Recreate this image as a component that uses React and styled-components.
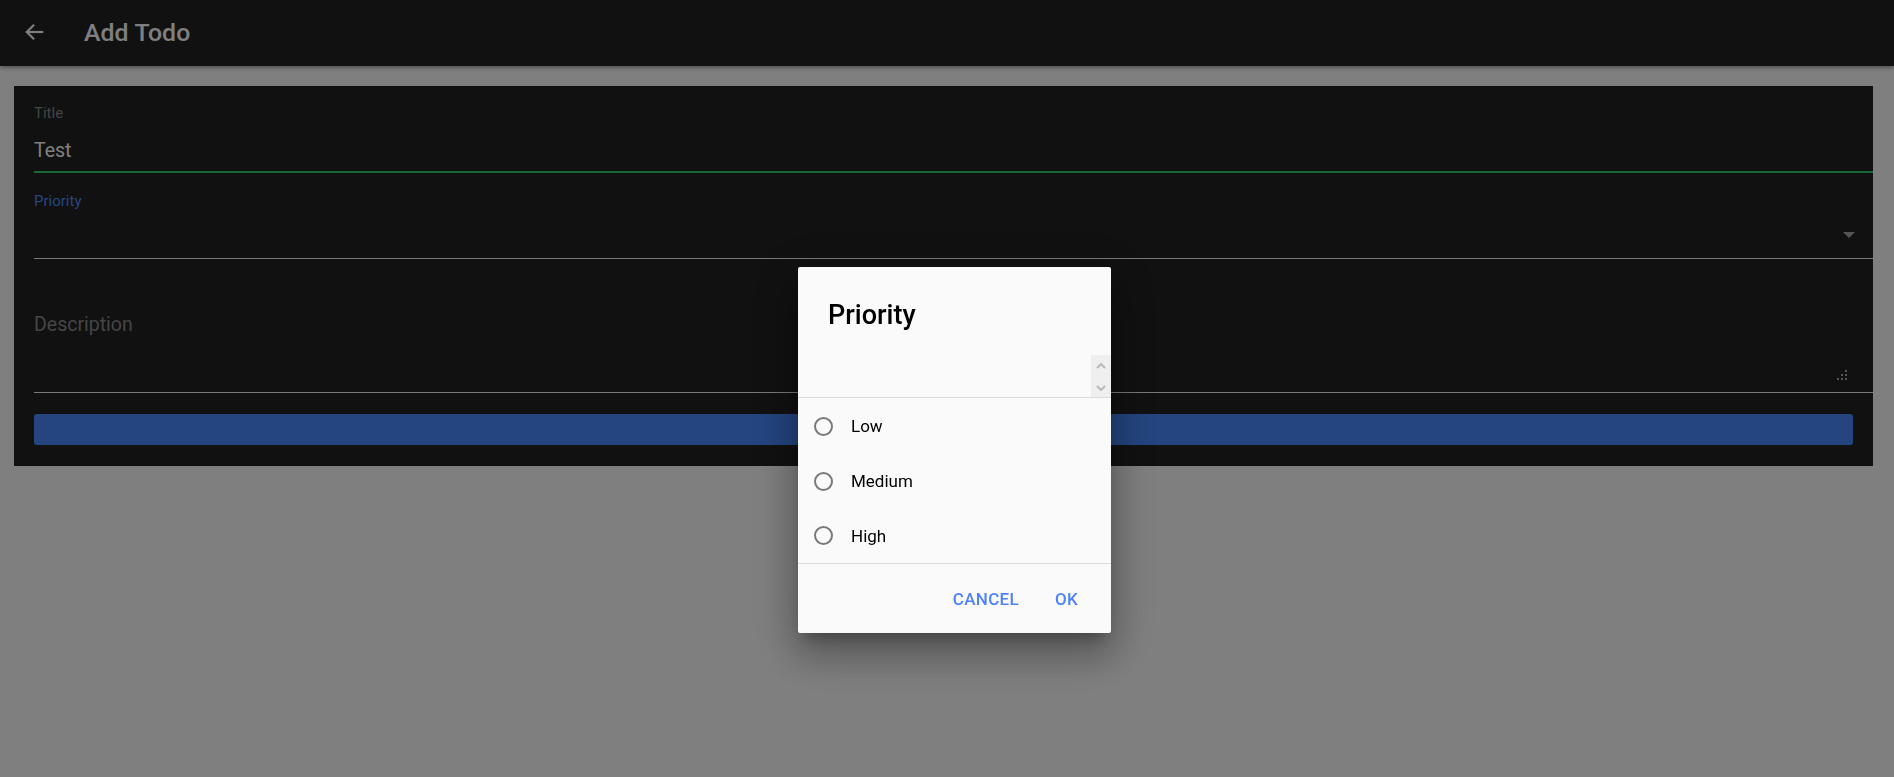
import React, { useState } from "react";
import styled, { createGlobalStyle } from "styled-components";

const GlobalStyle = createGlobalStyle`
	html, body {
		margin: 0;
		padding: 0;
		background: #ffffff;
		font-family: Roboto, "Liberation Sans", sans-serif;
		overflow: hidden;
	}
`;

const Page = styled.div`
	width: 1894px;
	height: 777px;
	background: #ffffff;
`;

const Toolbar = styled.header`
	height: 66px;
	background: #222222;
	display: flex;
	align-items: center;
	box-shadow: 0 2px 4px rgba(0, 0, 0, 0.35);
	position: relative;
`;

const BackButton = styled.button`
	border: none;
	background: none;
	padding: 0;
	margin: -2px 0 0 22px;
	width: 26px;
	height: 26px;
	display: flex;
	align-items: center;
	justify-content: center;
	color: #ffffff;
	cursor: pointer;
`;

const ToolbarTitle = styled.h1`
	margin: -2px 0 0 36px;
	font-size: 24.8px;
	font-weight: 500;
	color: #ffffff;
	letter-spacing: 0.1px;
`;

const Card = styled.form`
	margin: 20px 21px 0 14px;
	height: 380px;
	background: #222222;
	padding: 0 0 0 20px;
	box-sizing: border-box;
	display: flex;
	flex-direction: column;
`;

const Field = styled.div`
	display: flex;
	flex-direction: column;
	flex-shrink: 0;
	position: relative;
	border-bottom: ${(p) => (p.$active ? "2px solid #2dd36f" : "1px solid #f2f2f2")};
	height: ${(p) => p.$h}px;
	box-sizing: border-box;
`;

const Label = styled.label`
	font-size: 15px;
	line-height: 18px;
	color: ${(p) => p.$color || "#8a8a8a"};
	margin-top: ${(p) => p.$top}px;
`;

const Value = styled.div`
	font-size: 19.5px;
	line-height: 24px;
	color: #ffffff;
	margin-top: 17px;
`;

const Placeholder = styled.div`
	font-size: 19.5px;
	line-height: 24px;
	color: #8a8a8a;
	margin-top: 54px;
`;

const Caret = styled.span`
	position: absolute;
	right: 18px;
	top: 59px;
	width: 0;
	height: 0;
	border-left: 6px solid transparent;
	border-right: 6px solid transparent;
	border-top: 6px solid #aaaaaa;
`;

const ResizeGrip = styled.svg`
	position: absolute;
	right: 26px;
	bottom: 12px;
`;

const SubmitBar = styled.button`
	flex-shrink: 0;
	margin: 21px 20px 0 0;
	height: 31px;
	border: none;
	border-radius: 3px;
	background: #488aff;
`;

const Backdrop = styled.div`
	position: fixed;
	inset: 0;
	background: rgba(0, 0, 0, 0.5);
`;

const Dialog = styled.div`
	position: fixed;
	left: 798px;
	top: 267px;
	width: 313px;
	height: 366px;
	background: #fafafa;
	border-radius: 2px;
	box-shadow: 0 11px 15px -7px rgba(0, 0, 0, 0.3), 0 24px 38px 3px rgba(0, 0, 0, 0.2),
		0 9px 46px 8px rgba(0, 0, 0, 0.16);
	display: flex;
	flex-direction: column;
	font-family: Roboto, "Liberation Sans", sans-serif;
`;

const DialogTitle = styled.h2`
	margin: 0;
	padding: 32px 30px 0 30px;
	height: 88px;
	box-sizing: border-box;
	font-size: 27px;
	font-weight: 500;
	color: #000000;
`;

const ScrollStub = styled.div`
	height: 42px;
	display: flex;
	justify-content: flex-end;
	border-bottom: 1px solid #dcdcdc;
`;

const ScrollTrack = styled.div`
	width: 20px;
	background: #efefef;
	display: flex;
	flex-direction: column;
	justify-content: space-between;
	align-items: center;
	padding: 8px 0 6px;
	box-sizing: border-box;
`;

const Options = styled.div`
	display: flex;
	flex-direction: column;
	padding: 1px 0 0;
	height: 166px;
	box-sizing: border-box;
	border-bottom: 1px solid #dcdcdc;
`;

const Option = styled.label`
	height: 55px;
	display: flex;
	align-items: center;
	padding-left: 16px;
	font-size: 17px;
	color: #000000;
	cursor: pointer;
`;

const Radio = styled.span`
	width: 15px;
	height: 15px;
	border: 2px solid ${(p) => (p.$checked ? "#3880ff" : "#7a7a7a")};
	border-radius: 50%;
	margin-right: 18px;
	display: flex;
	align-items: center;
	justify-content: center;
	&::after {
		content: "";
		width: 8px;
		height: 8px;
		border-radius: 50%;
		background: ${(p) => (p.$checked ? "#3880ff" : "transparent")};
	}
`;

const Actions = styled.div`
	flex: 1;
	display: flex;
	justify-content: flex-end;
	align-items: center;
	padding: 0 33px 0 0;
	gap: 36px;
`;

const ActionButton = styled.button`
	border: none;
	background: none;
	font-family: Roboto, "Liberation Sans", sans-serif;
	font-size: 17px;
	font-weight: 500;
	color: #4d82fb;
	padding: 8px 0;
	letter-spacing: 0.3px;
	cursor: pointer;
`;

const options = ["Low", "Medium", "High"];

const App = () => {
	const [priority, setPriority] = useState(null);

	return (
		<Page>
			<GlobalStyle />
			<Toolbar>
				<BackButton aria-label="back">
					<svg width="22" height="22" viewBox="0 0 24 24" fill="none" stroke="currentColor" strokeWidth="2.4">
						<path d="M21 12H3" />
						<path d="M11 4l-8 8 8 8" />
					</svg>
				</BackButton>
				<ToolbarTitle>Add Todo</ToolbarTitle>
			</Toolbar>
			<Card onSubmit={(e) => e.preventDefault()}>
				<Field $active $h={87}>
					<Label $top={18}>Title</Label>
					<Value>Test</Value>
				</Field>
				<Field $h={86}>
					<Label $top={19} $color="#4d8bff">
						Priority
					</Label>
					<Caret />
				</Field>
				<Field $h={134}>
					<Placeholder>Description</Placeholder>
					<ResizeGrip width="10" height="10" viewBox="0 0 10 10" fill="#aaaaaa">
						<rect x="8" y="0" width="2" height="2" />
						<rect x="4" y="4" width="2" height="2" />
						<rect x="8" y="4" width="2" height="2" />
						<rect x="0" y="8" width="2" height="2" />
						<rect x="4" y="8" width="2" height="2" />
						<rect x="8" y="8" width="2" height="2" />
					</ResizeGrip>
				</Field>
				<SubmitBar type="submit" />
			</Card>
			<Backdrop />
			<Dialog role="dialog">
				<DialogTitle>Priority</DialogTitle>
				<ScrollStub>
					<ScrollTrack>
						<svg width="10" height="6" viewBox="0 0 10 6" fill="none" stroke="#b8b8b8" strokeWidth="2">
							<path d="M1 5l4-4 4 4" />
						</svg>
						<svg width="10" height="6" viewBox="0 0 10 6" fill="none" stroke="#b8b8b8" strokeWidth="2">
							<path d="M1 1l4 4 4-4" />
						</svg>
					</ScrollTrack>
				</ScrollStub>
				<Options>
					{options.map((o) => (
						<Option key={o} onClick={() => setPriority(o)}>
							<Radio $checked={priority === o} />
							{o}
						</Option>
					))}
				</Options>
				<Actions>
					<ActionButton>CANCEL</ActionButton>
					<ActionButton>OK</ActionButton>
				</Actions>
			</Dialog>
		</Page>
	);
};

export default App;
